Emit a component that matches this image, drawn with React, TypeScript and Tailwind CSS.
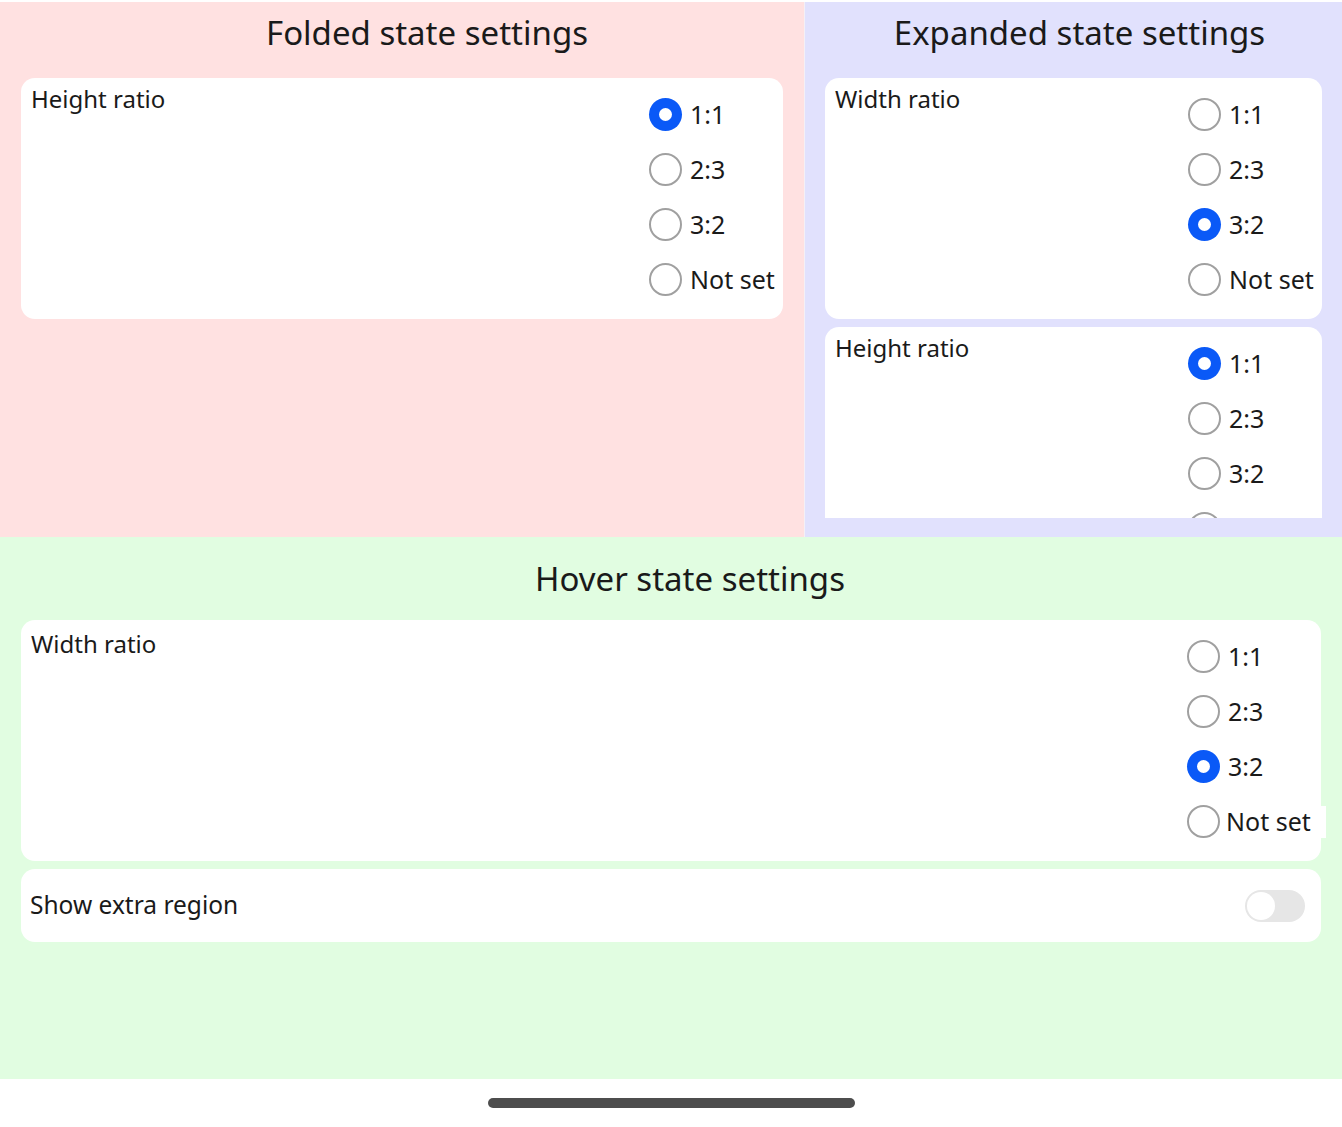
import React from "react";

const font = { fontFamily: '"Noto Sans", "Open Sans", sans-serif' };

function Radio({
  checked,
  label,
  patch,
}: {
  checked: boolean;
  label: string;
  patch?: boolean;
}) {
  return (
    <div className="flex h-[55px] items-center">
      {checked ? (
        <div className="flex h-[33px] w-[33px] shrink-0 items-center justify-center rounded-full bg-[#0a59f7]">
          <div className="h-[13px] w-[13px] rounded-full bg-white" />
        </div>
      ) : (
        <div className="h-[33px] w-[33px] shrink-0 rounded-full border-2 border-[#a0a0a0] bg-white" />
      )}
      {patch ? (
        <span className="ml-[6px] flex h-[32px] items-center whitespace-nowrap bg-white pr-[15px] text-[25px] leading-none text-[#1a1a1a]">
          {label}
        </span>
      ) : (
        <span className="ml-[8px] whitespace-nowrap text-[25px] leading-none text-[#1a1a1a]">{label}</span>
      )}
    </div>
  );
}

function RatioCard({
  label,
  selected,
  className,
  labelClass,
  patchLast,
}: {
  label: string;
  selected: number;
  className?: string;
  labelClass?: string;
  patchLast?: boolean;
}) {
  const opts = ["1:1", "2:3", "3:2", "Not set"];
  return (
    <div className={"flex rounded-[14px] bg-white pl-[10px] " + (className ?? "")}>
      <div className={"flex-1 text-[24px] leading-[30px] text-[#1a1a1a] " + (labelClass ?? "pt-[6px]")}>
        {label}
      </div>
      <div className="flex w-[134px] shrink-0 flex-col pb-[12px] pt-[9px]">
        {opts.map((o, i) => (
          <Radio key={o} checked={i === selected} label={o} patch={patchLast && i === 3} />
        ))}
      </div>
    </div>
  );
}

export default function App() {
  return (
    <div className="flex h-[1127px] w-[1342px] flex-col bg-white" style={font}>
      <div className="mt-[2px] flex h-[535px]">
        {/* Folded */}
        <div className="flex w-[804px] flex-col bg-[#ffe1e1] px-[21px]">
          <div className="flex h-[76px] items-start justify-center pl-[50px] pt-[10px] text-[33px] leading-[42px] text-[#1a1a1a]">
            Folded state settings
          </div>
          <RatioCard label="Height ratio" selected={0} />
        </div>
        <div className="w-[1px] bg-[#f4f0f6]" />
        {/* Expanded */}
        <div className="flex flex-1 flex-col overflow-hidden bg-[#e1e1fd] pl-[20px] pr-[20px]">
          <div className="flex h-[76px] items-start justify-center pl-[12px] pt-[10px] text-[33px] leading-[42px] text-[#1a1a1a]">
            Expanded state settings
          </div>
          <div className="flex h-[440px] flex-col gap-[8px] overflow-hidden">
            <RatioCard label="Width ratio" selected={2} className="shrink-0" />
            <RatioCard label="Height ratio" selected={0} className="shrink-0" />
          </div>
        </div>
      </div>
      {/* Hover */}
      <div className="flex h-[542px] flex-col bg-[#e1fde1] px-[21px]">
        <div className="flex h-[83px] items-start justify-center pl-[38px] pt-[21px] text-[33px] leading-[42px] text-[#1a1a1a]">
          Hover state settings
        </div>
        <RatioCard label="Width ratio" selected={2} labelClass="pt-[9px]" patchLast />
        <div className="mt-[8px] flex h-[73px] items-center justify-between rounded-[14px] bg-white pl-[9px] pr-[16px]">
          <span className="text-[24.5px] leading-none text-[#1a1a1a]">Show extra region</span>
          <div className="flex h-[32px] w-[60px] items-center rounded-full bg-[#e6e6e6] pl-[2px]">
            <div className="h-[28px] w-[28px] rounded-full bg-white" />
          </div>
        </div>
      </div>
      <div className="flex flex-1 items-center justify-center">
        <div className="h-[10px] w-[367px] rounded-full bg-[#4d4d4d]" />
      </div>
    </div>
  );
}
